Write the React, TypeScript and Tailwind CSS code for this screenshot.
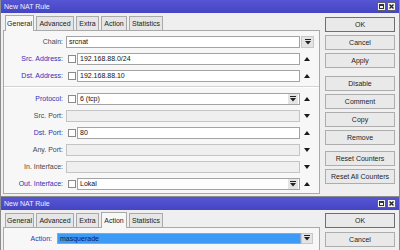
import React from "react";

type Row = {
  label: string;
  value?: string;
  on?: boolean; // blue label + checkbox
  combo?: "inner" | "outer";
  arrow?: "up" | "down";
};

const rows: (Row | "sep")[] = [
  { label: "Chain", value: "srcnat", combo: "outer" },
  { label: "Src. Address", value: "192.168.88.0/24", on: true, arrow: "up" },
  { label: "Dst. Address", value: "192.168.88.10", on: true, arrow: "up" },
  "sep",
  { label: "Protocol", value: "6 (tcp)", on: true, combo: "inner", arrow: "up" },
  { label: "Src. Port", arrow: "down" },
  { label: "Dst. Port", value: "80", on: true, arrow: "up" },
  { label: "Any. Port", arrow: "down" },
  { label: "In. Interface", arrow: "down" },
  { label: "Out. Interface", value: "Lokal", on: true, combo: "inner", arrow: "up" },
];

const tabs = [
  { name: "General", w: "w-[29px]" },
  { name: "Advanced", w: "w-[38px]" },
  { name: "Extra", w: "w-[23px]" },
  { name: "Action", w: "w-[26px]" },
  { name: "Statistics", w: "w-[34px]" },
];

function DropIcon() {
  return (
    <svg width="6" height="6" viewBox="0 0 6 6">
      <rect x="0" y="0" width="6" height="1" fill="#222" />
      <path d="M0 2 H6 L3 5.5 Z" fill="#222" />
    </svg>
  );
}

function Triangle({ dir }: { dir: "up" | "down" }) {
  return (
    <svg width="6" height="4" viewBox="0 0 6 4">
      <path d={dir === "up" ? "M0 4 H6 L3 0 Z" : "M0 0 H6 L3 4 Z"} fill="#1a1a1a" />
    </svg>
  );
}

function TitleBar() {
  return (
    <div className="h-[13px] flex items-center justify-between bg-gradient-to-b from-[#5656d4] to-[#4545c2] pl-[3px] pr-[3px]">
      <span className="text-[#eef0ff]">New NAT Rule</span>
      <div className="flex gap-[1px]">
        <div className="w-[9px] h-[9px] bg-[#f2f2f2] border border-[#606060] flex items-center justify-center">
          <div className="w-[5px] h-[5px] border border-[#333] border-t-2" />
        </div>
        <div className="w-[9px] h-[9px] bg-[#f2f2f2] border border-[#606060] flex items-center justify-center">
          <svg width="5" height="5" viewBox="0 0 5 5">
            <path d="M0.5 0.5 L4.5 4.5 M4.5 0.5 L0.5 4.5" stroke="#222" strokeWidth="1.4" />
          </svg>
        </div>
      </div>
    </div>
  );
}

function Tabs({ active }: { active: string }) {
  return (
    <div className="h-[17px] flex items-end gap-[2px] pl-[2px]">
      {tabs.map((t) => {
        const on = t.name === active;
        return (
          <div
            key={t.name}
            className={`${t.w} flex items-center justify-center border border-b-0 border-[#a9a9a9] ${
              on ? "h-[16px] bg-[#f7f7f7] -mb-px relative z-10" : "h-[14px] bg-[#e6e6e6]"
            }`}
          >
            {t.name}
          </div>
        );
      })}
    </div>
  );
}

function Btn({ label, def }: { label: string; def?: boolean }) {
  return (
    <div
      className={`h-[15px] w-[70px] flex items-center justify-center bg-[#e9e9e9] border ${
        def ? "border-[#6f6f6f]" : "border-[#adadad]"
      } text-[#1e1e1e]`}
    >
      {label}
    </div>
  );
}

function FieldRow({ r }: { r: Row }) {
  const box = r.value !== undefined ? "bg-white border-[#a3a3a3]" : "bg-[#efefef] border-[#c4c4c4]";
  return (
    <div className="h-[17px] flex items-center">
      <div className={`w-[59px] text-right whitespace-nowrap ${r.on ? "text-[#3030b8]" : "text-[#474747]"}`}>
        {r.label}:
      </div>
      {r.on ? (
        <>
          <div className="ml-[5px] w-[8px] h-[8px] bg-white border border-[#8a8a8a]" />
          <div className="w-[1px]" />
        </>
      ) : (
        <div className="w-[3px]" />
      )}
      <div className={`flex-1 h-[12px] border ${box} flex items-center`}>
        <span className="flex-1 pl-[2px] text-[#111]">{r.value}</span>
        {r.combo === "inner" && (
          <div className="w-[10px] h-[10px] mr-[1px] bg-[#e4e4e4] flex items-center justify-center">
            <DropIcon />
          </div>
        )}
      </div>
      {r.combo === "outer" ? (
        <div className="ml-[1px] w-[13px] h-[12px] bg-[#e4e4e4] border border-[#c8c8c8] flex items-center justify-center">
          <DropIcon />
        </div>
      ) : (
        <div className="w-[14px] flex items-center justify-center">{r.arrow && <Triangle dir={r.arrow} />}</div>
      )}
    </div>
  );
}

export default function App() {
  return (
    <div className="w-[400px] h-[250px] overflow-hidden bg-[#efefef] font-['Liberation_Sans',Arial,sans-serif] text-[7px] leading-none text-[#222]">
      {/* first window */}
      <div className="h-[197px] flex flex-col border-x border-b border-[#8c8c8c]">
        <TitleBar />
        <div className="flex flex-1">
          <div className="w-[319px] pl-[2px] pb-[2px] flex flex-col">
            <Tabs active="General" />
            <div className="flex-1 border border-[#a9a9a9] bg-[#f7f7f7] pt-[2px] pr-[5px]">
              {rows.map((r, i) =>
                r === "sep" ? (
                  <div key={i} className="h-[6px] flex items-center -mr-[5px]">
                    <div className="w-full border-t border-[#d2d2d2] border-b border-b-white" />
                  </div>
                ) : (
                  <FieldRow key={i} r={r} />
                )
              )}
            </div>
          </div>
          <div className="flex flex-col pl-[5px] pt-[4px] gap-[3px]">
            <Btn label="OK" def />
            <Btn label="Cancel" />
            <Btn label="Apply" />
            <div className="h-[2px]" />
            <Btn label="Disable" />
            <Btn label="Comment" />
            <Btn label="Copy" />
            <Btn label="Remove" />
            <div className="h-[0px]" />
            <Btn label="Reset Counters" />
            <Btn label="Reset All Counters" />
          </div>
        </div>
      </div>

      {/* second window */}
      <div className="h-[53px] flex flex-col border-x border-[#8c8c8c]">
        <TitleBar />
        <div className="flex flex-1">
          <div className="w-[319px] pl-[2px] flex flex-col">
            <Tabs active="Action" />
            <div className="flex-1 border border-b-0 border-[#a9a9a9] bg-[#f7f7f7] pt-[3px] pr-[6px]">
              <div className="h-[14px] flex items-center">
                <div className="w-[48px] text-right text-[#3030b8]">Action:</div>
                <div className="ml-[5px] flex-1 h-[11px] bg-[#3d9af5] border border-[#7fa9d6] flex items-center">
                  <span className="pl-[2px] text-[#0c1a4a]">masquerade</span>
                </div>
                <div className="w-[12px] h-[11px] bg-[#e4e4e4] border border-[#c8c8c8] flex items-center justify-center">
                  <DropIcon />
                </div>
              </div>
            </div>
          </div>
          <div className="flex flex-col pl-[5px] pt-[3px] gap-[4px]">
            <Btn label="OK" def />
            <Btn label="Cancel" />
          </div>
        </div>
      </div>
    </div>
  );
}
